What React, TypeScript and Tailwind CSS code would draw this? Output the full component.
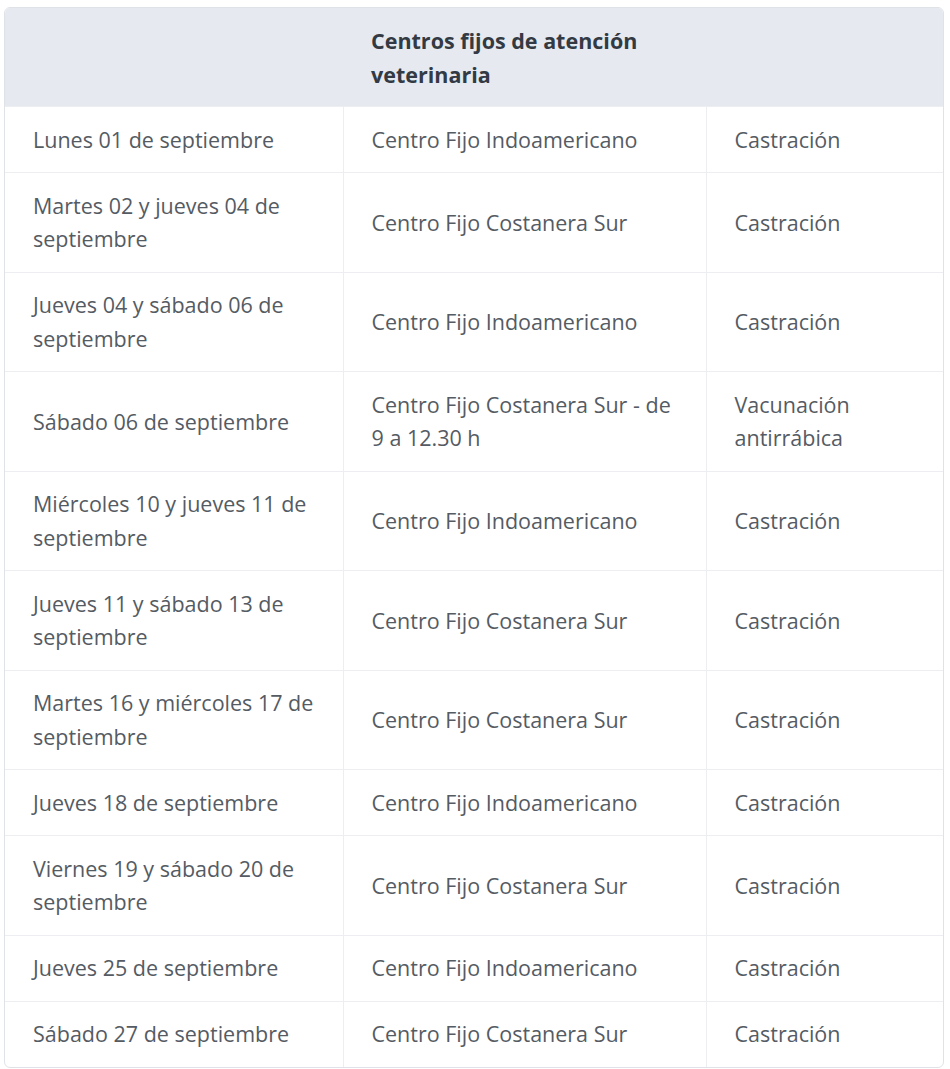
const rows: [string, string, string][] = [
	["Lunes 01 de septiembre", "Centro Fijo Indoamericano", "Castración"],
	["Martes 02 y jueves 04 de septiembre", "Centro Fijo Costanera Sur", "Castración"],
	["Jueves 04 y sábado 06 de septiembre", "Centro Fijo Indoamericano", "Castración"],
	["Sábado 06 de septiembre", "Centro Fijo Costanera Sur - de 9 a 12.30 h", "Vacunación antirrábica"],
	["Miércoles 10 y jueves 11 de septiembre", "Centro Fijo Indoamericano", "Castración"],
	["Jueves 11 y sábado 13 de septiembre", "Centro Fijo Costanera Sur", "Castración"],
	["Martes 16 y miércoles 17 de septiembre", "Centro Fijo Costanera Sur", "Castración"],
	["Jueves 18 de septiembre", "Centro Fijo Indoamericano", "Castración"],
	["Viernes 19 y sábado 20 de septiembre", "Centro Fijo Costanera Sur", "Castración"],
	["Jueves 25 de septiembre", "Centro Fijo Indoamericano", "Castración"],
	["Sábado 27 de septiembre", "Centro Fijo Costanera Sur", "Castración"],
];

const App = () => {
	return (
		<div className="w-[950px] h-[1069px] bg-white pl-[4px] pt-[7px] font-['Open_Sans',sans-serif]">
			<div className="w-[940px] rounded-md border border-[#dfe3e8] overflow-hidden">
				<table className="w-full border-collapse table-fixed text-[21.5px] leading-[33.5px]">
					<colgroup>
						<col className="w-[338px]" />
						<col className="w-[363px]" />
						<col />
					</colgroup>
					<thead>
						<tr className="bg-[#e6eaf0]">
							<th className="h-[98px]"></th>
							<th className="px-[28px] pt-[16px] pb-[15px] text-left font-bold text-[#333a44]">
								Centros fijos de atención veterinaria
							</th>
							<th></th>
						</tr>
					</thead>
					<tbody className="text-[#555b63]">
						{rows.map((row, i) => (
							<tr key={i} className="border-t border-[#eceef1]">
								{row.map((cell, j) => (
									<td
										key={j}
										className={`px-[28px] py-[15.75px] align-middle ${j > 0 ? "border-l border-[#eceef1]" : ""}`}
									>
										{cell}
									</td>
								))}
							</tr>
						))}
					</tbody>
				</table>
			</div>
		</div>
	);
};

export default App;
